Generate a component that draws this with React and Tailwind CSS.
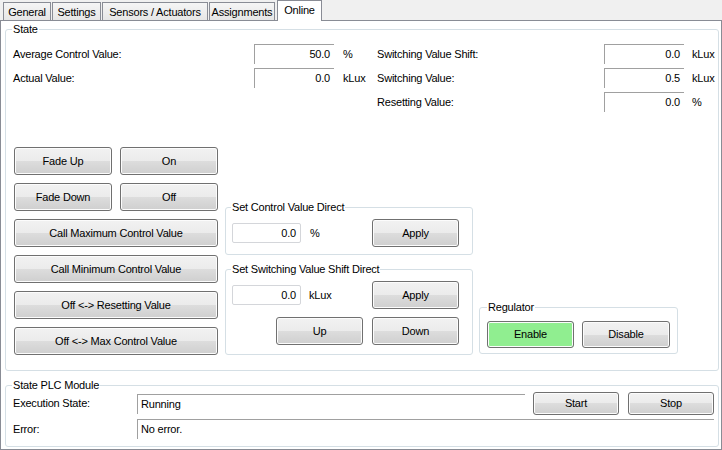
import React from 'react';

const btnBase =
  'flex items-center justify-center border border-[#707070] rounded-[3px] shadow-[inset_0_0_0_1px_#fcfcfc] text-black';
const btnGrey = 'bg-[linear-gradient(#f2f2f2_0%,#ebebeb_50%,#dddddd_50%,#cfcfcf_100%)]';
const btnGreen = 'bg-[#90ee90] shadow-[inset_0_0_0_1px_#a8f2a8]';

const Button = ({ label, className = '', green }) => (
  <div className={`${btnBase} ${green ? btnGreen : btnGrey} ${className}`}>
    {label}
  </div>
);

// sunken box: only top and left edge drawn on white
const ValueBox = ({ value, className = '', left }) => (
  <div
    className={`h-[20px] border-t border-l border-[#a0a0a0] bg-white leading-[19px] ${
      left ? 'text-left pl-[3px]' : 'text-right pr-[4px]'
    } ${className}`}
  >
    {value}
  </div>
);

// bordered input box used inside the small group boxes
const InputBox = ({ value }) => (
  <div className="w-[69px] h-[20px] border border-[#d4d6da] rounded-[2px] bg-white text-right pr-[4px] leading-[18px]">
    {value}
  </div>
);

// legend sits inside the padding, so pull it back to 7px from the border
const Group = ({ title, className = '', legend = '-ml-px', children }) => (
  <fieldset className={`border border-[#d5dfe5] rounded-[3px] ${className}`}>
    <legend className={`${legend} px-[1px] leading-[13px]`}>{title}</legend>
    {children}
  </fieldset>
);

const Row = ({ label, value, unit, labelW, unitMl }) => (
  <div className="flex items-center h-[20px]">
    <div className={labelW}>{label}</div>
    <ValueBox value={value} className="w-[80px]" />
    <div className={unitMl}>{unit}</div>
  </div>
);

const tabs = [
  { name: 'General', cls: 'ml-[3px] w-[48px]' },
  { name: 'Settings', cls: 'ml-[1px] w-[49px]' },
  { name: 'Sensors / Actuators', cls: 'ml-[1px] w-[106px]' },
  { name: 'Assignments', cls: 'ml-[1px] w-[66px]' },
];

export default function App() {
  return (
    <div className="w-[722px] h-[450px] bg-[#f0f0f0] text-[11px] leading-[13px] tracking-[-0.2px] text-black font-['Liberation_Sans',Arial,sans-serif] overflow-hidden">
      {/* tab strip */}
      <div className="flex items-end h-[20px]">
        {tabs.map((t) => (
          <div
            key={t.name}
            className={`${t.cls} h-[18px] border border-b-0 border-[#898c95] bg-[linear-gradient(#f5f5f5,#e6e6e6)] flex items-center justify-center pt-[1px] whitespace-nowrap`}
          >
            {t.name}
          </div>
        ))}
        <div className="ml-[2px] w-[45px] h-[21px] -mb-px relative z-10 border border-b-0 border-[#898c95] bg-white flex items-start justify-center pt-[3px]">
          Online
        </div>
      </div>

      {/* tab page */}
      <div className="h-[430px] border border-[#898c95] bg-white pl-[4px] pr-[2px] pt-[2px]">
        <Group title="State" className="w-[714px] pl-[7px] pt-[8px] pb-[15px]">
          <div className="flex">
            <div className="w-[364px] flex flex-col gap-[4px]">
              <Row label="Average Control Value:" value="50.0" unit="%" labelW="w-[241px]" unitMl="ml-[9px]" />
              <Row label="Actual Value:" value="0.0" unit="kLux" labelW="w-[241px]" unitMl="ml-[9px]" />
            </div>
            <div className="flex flex-col gap-[4px]">
              <Row label="Switching Value Shift:" value="0.0" unit="kLux" labelW="w-[227px]" unitMl="ml-[8px]" />
              <Row label="Switching Value:" value="0.5" unit="kLux" labelW="w-[227px]" unitMl="ml-[8px]" />
              <Row label="Resetting Value:" value="0.0" unit="%" labelW="w-[227px]" unitMl="ml-[8px]" />
            </div>
          </div>

          <div className="flex items-end mt-[35px]">
            {/* command buttons */}
            <div className="ml-[1px] w-[204px] flex flex-col gap-[8px]">
              <div className="flex gap-[8px]">
                <Button label="Fade Up" className="w-[98px] h-[28px]" />
                <Button label="On" className="w-[98px] h-[28px]" />
              </div>
              <div className="flex gap-[8px]">
                <Button label="Fade Down" className="w-[98px] h-[28px]" />
                <Button label="Off" className="w-[98px] h-[28px]" />
              </div>
              <Button label="Call Maximum Control Value" className="h-[28px]" />
              <Button label="Call Minimum Control Value" className="h-[28px]" />
              <Button label="Off <-> Resetting Value" className="h-[28px]" />
              <Button label="Off <-> Max Control Value" className="h-[28px]" />
            </div>

            {/* direct settings */}
            <div className="ml-[7px] w-[248px] flex flex-col gap-[8px]">
              <Group title="Set Control Value Direct" className="pl-[6px] pr-[13px] pt-[5px] pb-[7px]">
                <div className="flex items-center">
                  <InputBox value="0.0" />
                  <div className="ml-[9px]">%</div>
                  <Button label="Apply" className="ml-auto w-[87px] h-[28px]" />
                </div>
              </Group>
              <Group title="Set Switching Value Shift Direct" className="pl-[6px] pr-[13px] pt-[5px] pb-[9px]">
                <div className="flex items-center">
                  <InputBox value="0.0" />
                  <div className="ml-[8px]">kLux</div>
                  <Button label="Apply" className="ml-auto w-[87px] h-[28px]" />
                </div>
                <div className="flex justify-end gap-[9px] mt-[8px]">
                  <Button label="Up" className="w-[87px] h-[28px]" />
                  <Button label="Down" className="w-[87px] h-[28px]" />
                </div>
              </Group>
            </div>

            {/* regulator */}
            <Group title="Regulator" legend="ml-0" className="ml-[6px] mb-[1px] w-[199px] pl-[7px] pr-[7px] pt-[7px] pb-[5px]">
              <div className="flex gap-[8px]">
                <Button label="Enable" green className="w-[87px] h-[27px]" />
                <Button label="Disable" className="w-[88px] h-[27px]" />
              </div>
            </Group>
          </div>
        </Group>

        <Group title="State PLC Module" className="mt-[8px] w-[714px] pl-[7px] pb-[7px]">
          <div className="flex items-center h-[23px]">
            <div className="w-[124px]">Execution State:</div>
            <ValueBox value="Running" left className="w-[388px]" />
            <Button label="Start" className="ml-[8px] w-[86px] h-[23px]" />
            <Button label="Stop" className="ml-[9px] w-[86px] h-[23px]" />
          </div>
          <div className="flex items-center mt-[4px]">
            <div className="w-[124px]">Error:</div>
            <ValueBox value="No error." left className="w-[577px]" />
          </div>
        </Group>
      </div>
    </div>
  );
}
